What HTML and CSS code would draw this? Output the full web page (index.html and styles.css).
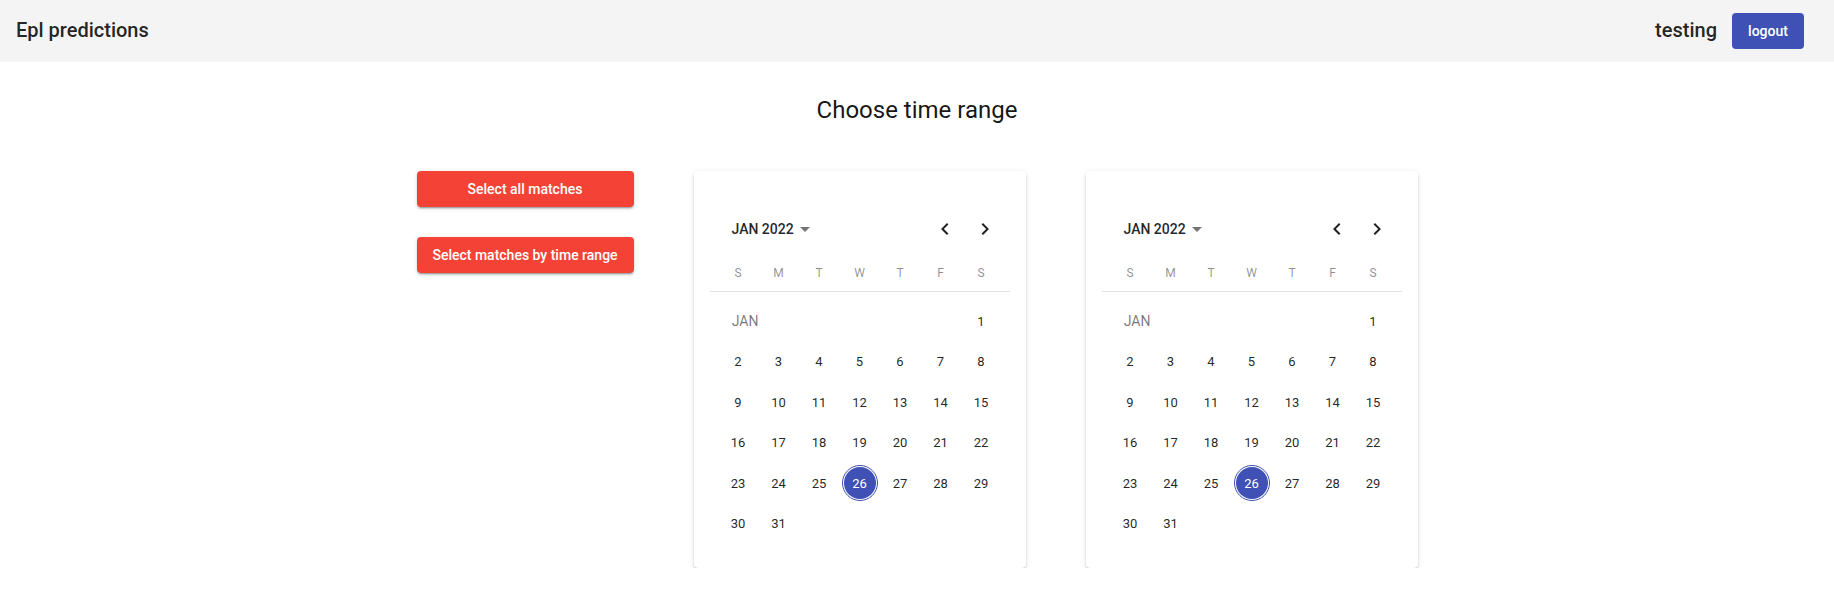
FILE: index.html
```html
<!DOCTYPE html>
<html lang="en">
<head>
<meta charset="utf-8">
<title>Epl predictions</title>
<link rel="stylesheet" href="styles.css">
</head>
<body>
<header class="topbar">
  <div class="brand">Epl predictions</div>
  <div class="user">
    <span class="username">testing</span>
    <button class="btn btn-logout">logout</button>
  </div>
</header>
<main class="page">
  <h1 class="title">Choose time range</h1>
  <div class="content">
    <div class="actions">
      <button class="btn btn-red">Select all matches</button>
      <button class="btn btn-red">Select matches by time range</button>
    </div>

    <div class="calendar">
      <div class="cal-header">
        <div class="cal-label">JAN 2022<span class="drop"></span></div>
        <div class="cal-nav">
          <span class="nav-btn"><svg viewBox="0 0 24 24" width="24" height="24"><path d="M15.41 7.41 14 6l-6 6 6 6 1.41-1.41L10.83 12z"/></svg></span>
          <span class="nav-btn"><svg viewBox="0 0 24 24" width="24" height="24"><path d="M10 6 8.59 7.41 13.17 12l-4.58 4.59L10 18l6-6z"/></svg></span>
        </div>
      </div>
      <div class="weekdays">
        <span>S</span><span>M</span><span>T</span><span>W</span><span>T</span><span>F</span><span>S</span>
      </div>
      <div class="days">
        <div class="month-label">JAN</div><div class="day">1</div>
        <div class="day">2</div><div class="day">3</div><div class="day">4</div><div class="day">5</div><div class="day">6</div><div class="day">7</div><div class="day">8</div>
        <div class="day">9</div><div class="day">10</div><div class="day">11</div><div class="day">12</div><div class="day">13</div><div class="day">14</div><div class="day">15</div>
        <div class="day">16</div><div class="day">17</div><div class="day">18</div><div class="day">19</div><div class="day">20</div><div class="day">21</div><div class="day">22</div>
        <div class="day">23</div><div class="day">24</div><div class="day">25</div><div class="day"><span class="selected">26</span></div><div class="day">27</div><div class="day">28</div><div class="day">29</div>
        <div class="day">30</div><div class="day">31</div>
      </div>
    </div>

    <div class="calendar">
      <div class="cal-header">
        <div class="cal-label">JAN 2022<span class="drop"></span></div>
        <div class="cal-nav">
          <span class="nav-btn"><svg viewBox="0 0 24 24" width="24" height="24"><path d="M15.41 7.41 14 6l-6 6 6 6 1.41-1.41L10.83 12z"/></svg></span>
          <span class="nav-btn"><svg viewBox="0 0 24 24" width="24" height="24"><path d="M10 6 8.59 7.41 13.17 12l-4.58 4.59L10 18l6-6z"/></svg></span>
        </div>
      </div>
      <div class="weekdays">
        <span>S</span><span>M</span><span>T</span><span>W</span><span>T</span><span>F</span><span>S</span>
      </div>
      <div class="days">
        <div class="month-label">JAN</div><div class="day">1</div>
        <div class="day">2</div><div class="day">3</div><div class="day">4</div><div class="day">5</div><div class="day">6</div><div class="day">7</div><div class="day">8</div>
        <div class="day">9</div><div class="day">10</div><div class="day">11</div><div class="day">12</div><div class="day">13</div><div class="day">14</div><div class="day">15</div>
        <div class="day">16</div><div class="day">17</div><div class="day">18</div><div class="day">19</div><div class="day">20</div><div class="day">21</div><div class="day">22</div>
        <div class="day">23</div><div class="day">24</div><div class="day">25</div><div class="day"><span class="selected">26</span></div><div class="day">27</div><div class="day">28</div><div class="day">29</div>
        <div class="day">30</div><div class="day">31</div>
      </div>
    </div>
  </div>
</main>
</body>
</html>
```

FILE: styles.css
```css
* { box-sizing: border-box; }

html, body {
  margin: 0;
  padding: 0;
  background: #ffffff;
  font-family: Roboto, "Liberation Sans", Arial, sans-serif;
  color: rgba(0, 0, 0, 0.87);
}

.topbar {
  height: 62px;
  background: #f4f4f4;
  display: flex;
  align-items: center;
  justify-content: space-between;
  padding: 0 30px 0 16px;
}

.brand {
  font-size: 20px;
  font-weight: 500;
  line-height: 23px;
  margin-top: -2px;
}

.user {
  display: flex;
  align-items: center;
  gap: 15px;
}

.username {
  font-size: 20px;
  font-weight: 500;
  line-height: 23px;
  margin-top: -2px;
}

.btn {
  font-family: Roboto, "Liberation Sans", Arial, sans-serif;
  font-size: 14px;
  font-weight: 500;
  color: #ffffff;
  border: none;
  border-radius: 4px;
  height: 36px;
  cursor: pointer;
  display: flex;
  align-items: center;
  justify-content: center;
}

.btn-logout {
  background: #3f51b5;
  width: 72px;
  padding: 0 16px;
}

.btn-red {
  background: #f44336;
  width: 217px;
  box-shadow: 0 3px 1px -2px rgba(0,0,0,0.2), 0 2px 2px 0 rgba(0,0,0,0.14), 0 1px 5px 0 rgba(0,0,0,0.12);
}

.page {
  padding-top: 34px;
}

.title {
  margin: 0;
  font-size: 24px;
  font-weight: 400;
  line-height: 28px;
  text-align: center;
  color: rgba(0, 0, 0, 0.92);
}

.content {
  margin-top: 47px;
  display: flex;
  justify-content: center;
  align-items: flex-start;
  gap: 60px;
}

.actions {
  display: flex;
  flex-direction: column;
  gap: 30px;
  width: 217px;
}

.calendar {
  width: 332px;
  background: #ffffff;
  border-radius: 4px;
  box-shadow: 0 3px 1px -2px rgba(0,0,0,0.2), 0 2px 2px 0 rgba(0,0,0,0.14), 0 1px 5px 0 rgba(0,0,0,0.12);
  padding: 43px 16px 24px;
}

.cal-header {
  height: 30px;
  display: flex;
  align-items: center;
  justify-content: space-between;
  padding-left: 22px;
  padding-right: 5px;
}

.cal-label {
  font-size: 14px;
  font-weight: 500;
  display: flex;
  align-items: center;
}

.drop {
  width: 0;
  height: 0;
  margin-left: 6px;
  margin-top: 1px;
  border-left: 5px solid transparent;
  border-right: 5px solid transparent;
  border-top: 5px solid #757575;
}

.cal-nav {
  display: flex;
}

.nav-btn {
  width: 40px;
  height: 30px;
  display: flex;
  align-items: center;
  justify-content: center;
}

.nav-btn svg {
  fill: rgba(0, 0, 0, 0.87);
  display: block;
}

.weekdays {
  margin-top: 12px;
  height: 36px;
  border-bottom: 1px solid #e0e0e0;
  display: grid;
  grid-template-columns: repeat(7, 40.5px);
  justify-content: center;
  align-items: center;
  font-size: 12px;
  color: rgba(0, 0, 0, 0.45);
  padding-bottom: 1px;
}

.weekdays span {
  text-align: center;
}

.days {
  padding-top: 9px;
  display: grid;
  grid-template-columns: repeat(7, 40.5px);
  grid-auto-rows: 40.5px;
  justify-content: center;
}

.month-label {
  grid-column: span 6;
  display: flex;
  align-items: center;
  padding-left: 14px;
  font-size: 14px;
  color: rgba(0, 0, 0, 0.54);
}

.day {
  display: flex;
  align-items: center;
  justify-content: center;
  font-size: 13px;
  color: rgba(0, 0, 0, 0.87);
}

.selected {
  width: 36px;
  height: 36px;
  border-radius: 50%;
  border: 1px solid #3f51b5;
  padding: 1px;
  background: #3f51b5;
  background-clip: content-box;
  color: #ffffff;
  display: flex;
  align-items: center;
  justify-content: center;
}
```
